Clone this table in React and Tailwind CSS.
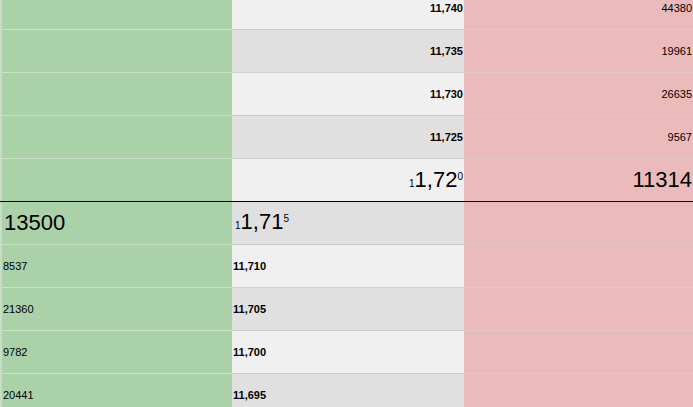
const ASKS = [
  { price: '11,740', qty: '44380' },
  { price: '11,735', qty: '19961' },
  { price: '11,730', qty: '26635' },
  { price: '11,725', qty: '9567' },
];

const BIDS = [
  { price: '11,710', qty: '8537' },
  { price: '11,705', qty: '21360' },
  { price: '11,700', qty: '9782' },
  { price: '11,695', qty: '20441' },
];

const FONT = { fontFamily: '"Liberation Sans", Arial, sans-serif' };

function BigPrice({ lead, main, tail }) {
  return (
    <span className="inline-flex items-baseline leading-none">
      <span className="text-[10px] text-black">{lead}</span>
      <span className="text-[22px]">{main}</span>
      <span className="text-[10px] relative -top-[7px]">{tail}</span>
    </span>
  );
}

function Row({ idx, left, mid, right, midAlign = 'right', black = false }) {
  const midBg = idx % 2 === 0 ? 'bg-[#f0f0f0]' : 'bg-[#e0e0e0]';
  const line = black ? 'border-b border-black' : '';
  return (
    <div className={`flex h-[43px] ${line}`}>
      <div className={`w-[232px] shrink-0 bg-[#abd1a8] border-l-2 border-l-[#c9dcc8] flex items-center pl-[1px] ${black ? '' : 'border-b border-b-[#cbe0c9]'}`}>
        {left}
      </div>
      <div className={`w-[232px] shrink-0 ${midBg} flex items-center ${midAlign === 'right' ? 'justify-end pr-[1px]' : 'justify-start pl-[1px]'} ${black ? '' : 'border-b border-b-[#cdcdcd]'}`}>
        {mid}
      </div>
      <div className={`flex-1 bg-[#ebbbbb] flex items-center justify-end pr-[1px] ${black ? '' : 'border-b border-b-[#dfcaca]'}`}>
        {right}
      </div>
    </div>
  );
}

export default function App() {
  return (
    <div className="w-[693px] h-[407px] overflow-hidden bg-white text-black" style={FONT}>
      <div className="-mt-[13px]">
        {ASKS.map((a, i) => (
          <Row
            key={a.price}
            idx={i}
            left={null}
            mid={<span className="text-[11px] font-bold">{a.price}</span>}
            right={<span className="text-[11px]">{a.qty}</span>}
          />
        ))}
        <Row
          idx={4}
          black
          left={null}
          mid={<BigPrice lead="1" main="1,72" tail="0" />}
          right={<span className="text-[22px] leading-none">11314</span>}
        />
        <Row
          idx={5}
          midAlign="left"
          left={<span className="text-[22px] leading-none pl-[1px]">13500</span>}
          mid={<span className="pl-[2px]"><BigPrice lead="1" main="1,71" tail="5" /></span>}
          right={null}
        />
        {BIDS.map((b, i) => (
          <Row
            key={b.price}
            idx={i + 6}
            midAlign="left"
            left={<span className="text-[11px]">{b.qty}</span>}
            mid={<span className="text-[11px] font-bold">{b.price}</span>}
            right={null}
          />
        ))}
      </div>
    </div>
  );
}
